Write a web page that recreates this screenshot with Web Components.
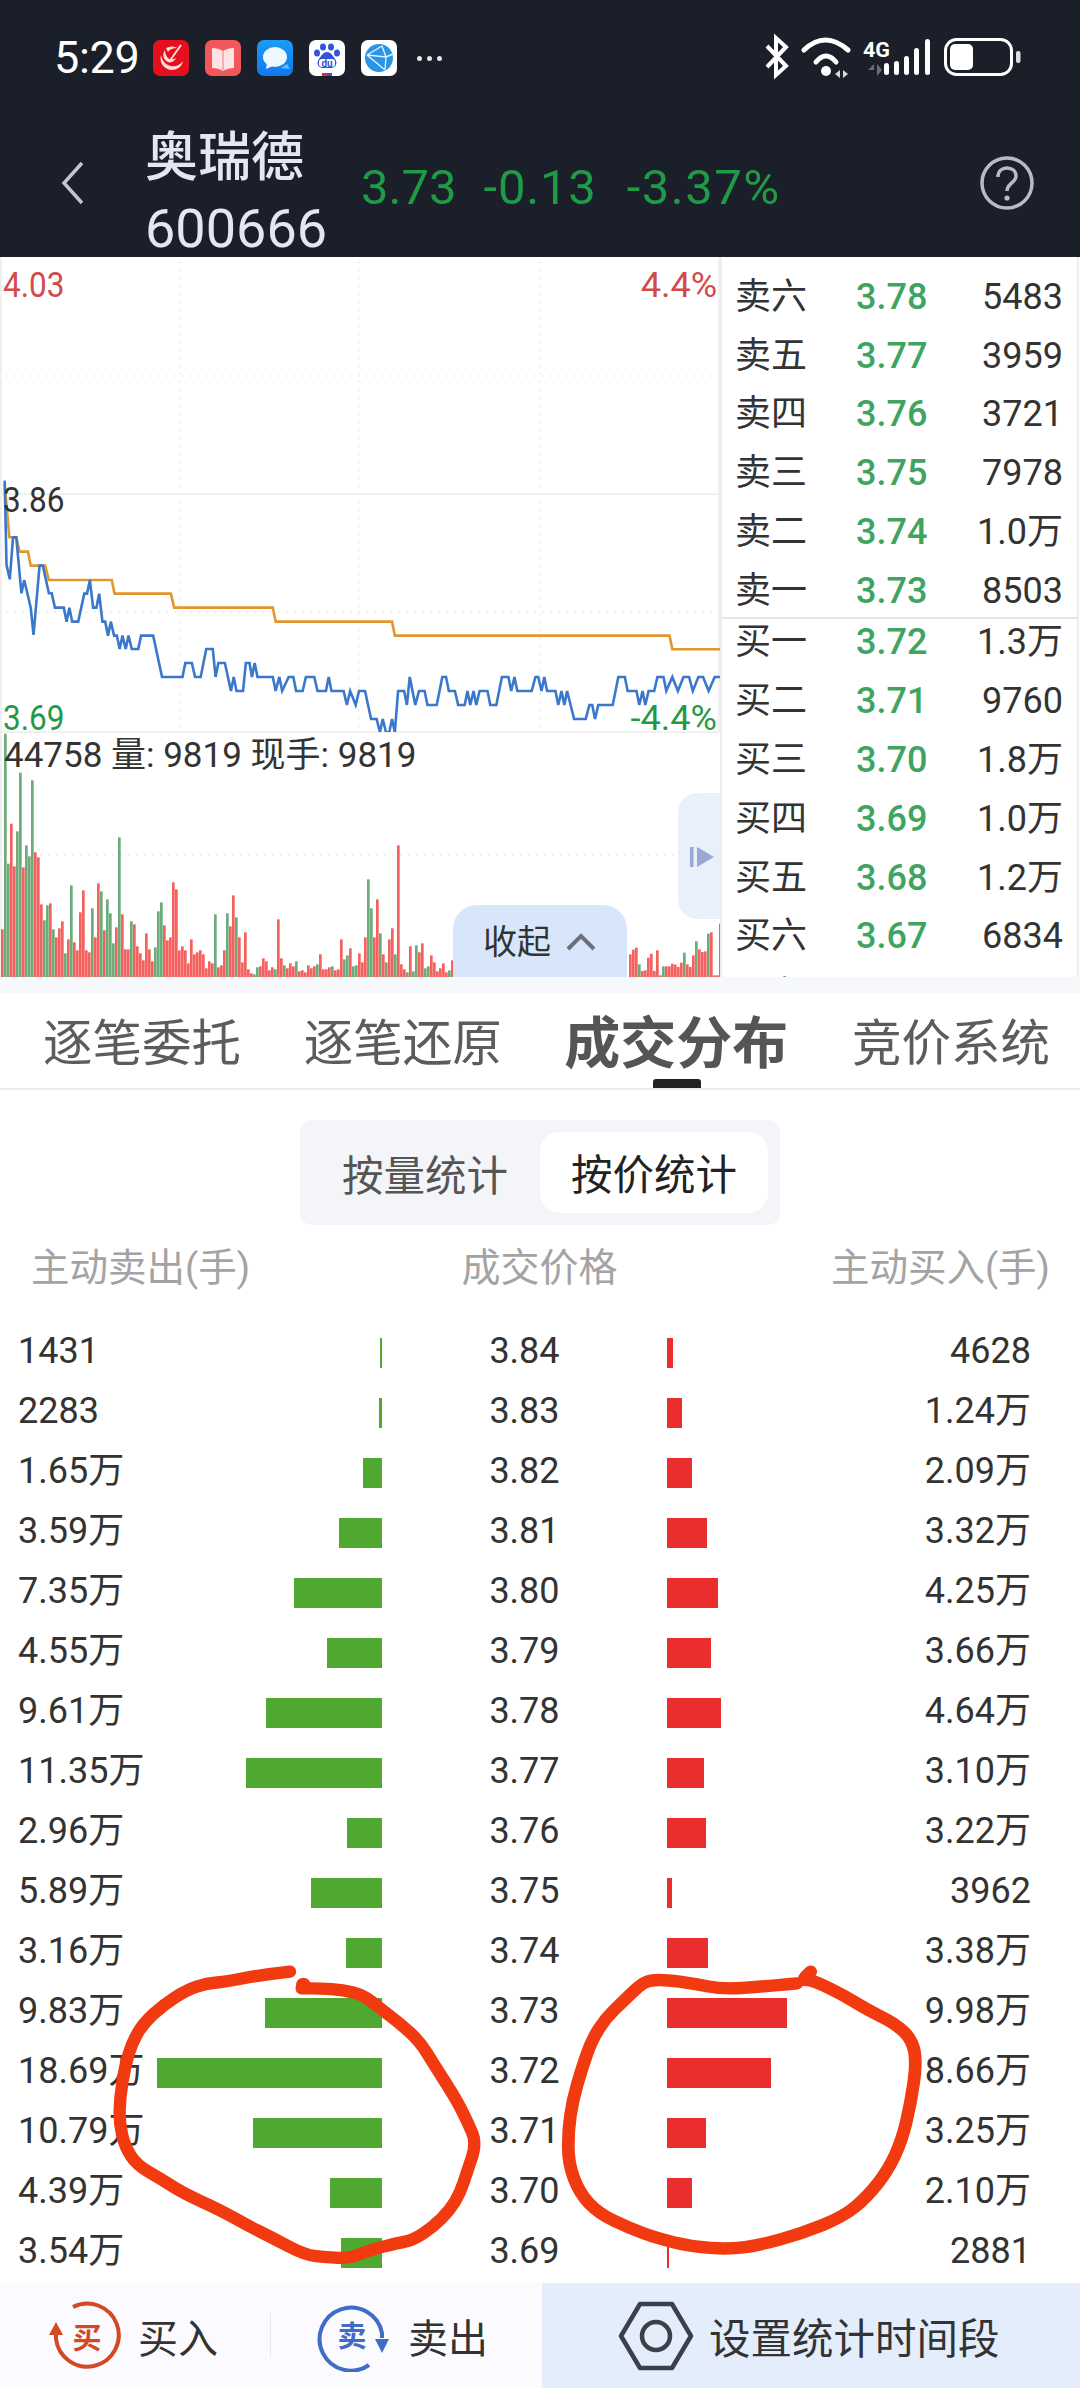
<!DOCTYPE html>
<html lang="zh">
<head>
<meta charset="utf-8">
<title>奥瑞德 成交分布</title>
<style>
  html, body { margin: 0; padding: 0; background: #fff; }
  body {
    width: 1080px;
    height: 2388px;
    overflow: hidden;
    position: relative;
    font-family: Roboto, "Noto Sans CJK SC", sans-serif;
    display: flex;
    flex-direction: column;
  }
</style>
</head>
<body>
  <status-bar></status-bar>
  <quote-header>
    <span slot="name">奥瑞德</span>
    <span slot="code">600666</span>
    <span slot="price">3.73</span>
    <span slot="change">-0.13</span>
    <span slot="percent">-3.37%</span>
  </quote-header>

  <market-panel>
    <minute-chart slot="chart"></minute-chart>
    <order-book slot="book">
      <book-row slot="sell" label="卖六" price="3.78">5483</book-row>
      <book-row slot="sell" label="卖五" price="3.77">3959</book-row>
      <book-row slot="sell" label="卖四" price="3.76">3721</book-row>
      <book-row slot="sell" label="卖三" price="3.75">7978</book-row>
      <book-row slot="sell" label="卖二" price="3.74">1.0万</book-row>
      <book-row slot="sell" label="卖一" price="3.73">8503</book-row>
      <book-row slot="buy" label="买一" price="3.72">1.3万</book-row>
      <book-row slot="buy" label="买二" price="3.71">9760</book-row>
      <book-row slot="buy" label="买三" price="3.70">1.8万</book-row>
      <book-row slot="buy" label="买四" price="3.69">1.0万</book-row>
      <book-row slot="buy" label="买五" price="3.68">1.2万</book-row>
      <book-row slot="buy" label="买六" price="3.67">6834</book-row>
      <book-row slot="buy" label="买七" price=""></book-row>
    </order-book>
  </market-panel>

  <tab-bar>
    <tab-item style="width:198px">逐笔委托</tab-item>
    <tab-item style="width:198px">逐笔还原</tab-item>
    <tab-item active style="width:225px">成交分布</tab-item>
    <tab-item style="width:198px">竞价系统</tab-item>
  </tab-bar>

  <seg-toggle>
    <span slot="first">按量统计</span>
    <span slot="second">按价统计</span>
  </seg-toggle>

  <dist-head></dist-head>
  <dist-table>
    <dist-row sell="1431" sw="2" price="3.84" bw="6" buy="4628"></dist-row>
    <dist-row sell="2283" sw="3" price="3.83" bw="15" buy="1.24万"></dist-row>
    <dist-row sell="1.65万" sw="19" price="3.82" bw="25" buy="2.09万"></dist-row>
    <dist-row sell="3.59万" sw="43" price="3.81" bw="40" buy="3.32万"></dist-row>
    <dist-row sell="7.35万" sw="88" price="3.80" bw="51" buy="4.25万"></dist-row>
    <dist-row sell="4.55万" sw="55" price="3.79" bw="44" buy="3.66万"></dist-row>
    <dist-row sell="9.61万" sw="116" price="3.78" bw="54" buy="4.64万"></dist-row>
    <dist-row sell="11.35万" sw="136" price="3.77" bw="37" buy="3.10万"></dist-row>
    <dist-row sell="2.96万" sw="35" price="3.76" bw="39" buy="3.22万"></dist-row>
    <dist-row sell="5.89万" sw="71" price="3.75" bw="5" buy="3962"></dist-row>
    <dist-row sell="3.16万" sw="36" price="3.74" bw="41" buy="3.38万"></dist-row>
    <dist-row sell="9.83万" sw="117" price="3.73" bw="120" buy="9.98万"></dist-row>
    <dist-row sell="18.69万" sw="225" price="3.72" bw="104" buy="8.66万"></dist-row>
    <dist-row sell="10.79万" sw="129" price="3.71" bw="39" buy="3.25万"></dist-row>
    <dist-row sell="4.39万" sw="52" price="3.70" bw="25" buy="2.10万"></dist-row>
    <dist-row sell="3.54万" sw="41" price="3.69" bw="2" buy="2881"></dist-row>
  </dist-table>

  <action-bar></action-bar>
  <scribble-overlay></scribble-overlay>

<script>
const FONT = `Roboto, "Noto Sans CJK SC", sans-serif`;

class StatusBar extends HTMLElement {
  constructor() {
    super();
    this.attachShadow({ mode: "open" });
    this.shadowRoot.innerHTML = `
      <style>
        :host { display: flex; align-items: flex-start; height: 116px; background: #1b1f2a; padding: 38px 0 0 54px; box-sizing: border-box; font-family: ${FONT}; }
        .time { width: 99px; font-size: 45px; line-height: 40px; font-weight: 400; color: #fff; letter-spacing: -0.3px; }
        .apps { display: flex; gap: 16px; margin-top: 2px; }
        .apps svg { width: 36px; height: 36px; display: block; }
        .more { width: 26px; margin: 2px 0 0 20px; display: flex; gap: 5px; height: 36px; align-items: center; }
        .more i { width: 5px; height: 5px; border-radius: 50%; background: #e6e6e6; }
        .sys { margin-left: auto; margin-right: 55px; width: 260px; height: 60px; margin-top: -8px; display: block; }
      </style>
      <span class="time">5:29</span>
      <div class="apps">
        <svg viewBox="0 0 36 36">
          <rect width="36" height="36" rx="7" fill="#e60f1e"/>
          <path d="M8 15c-2 8 3 14 10 15 6 0 11-3 12-9-3 4-7 6-12 5-5-1-9-5-10-11z" fill="#f9dcd8"/>
          <path d="M12 10c-3 4-2 10 3 12 4 1 7-1 8-4-3 2-6 2-8 0-2-2-3-5-3-8z" fill="#f9dcd8"/>
          <path d="M13 8c4-2 8-2 11 0-4 0-7 1-9 4z" fill="#f9dcd8"/>
          <path d="M16 22L28 5" stroke="#f9dcd8" stroke-width="2"/>
        </svg>
        <svg viewBox="0 0 36 36">
          <rect width="36" height="36" rx="7" fill="#f2585a"/>
          <path d="M7 8c4 0 8 1 11 3 3-2 7-3 11-3v20c-4 0-8 1-11 3-3-2-7-3-11-3z" fill="#fde3e3"/>
          <rect x="17" y="11" width="2" height="19" fill="#f7b1b1"/>
        </svg>
        <svg viewBox="0 0 36 36">
          <defs><linearGradient id="bl" x1="0" y1="0" x2="0" y2="1"><stop offset="0" stop-color="#1c9cf5"/><stop offset="1" stop-color="#0f78ee"/></linearGradient></defs>
          <rect width="36" height="36" rx="7" fill="url(#bl)"/>
          <path d="M30 24l3 5-9-1z" fill="#63c0f7"/>
          <ellipse cx="18" cy="17" rx="12" ry="10" fill="#eef8ff"/>
          <path d="M10 23l-1 6 7-3z" fill="#eef8ff"/>
        </svg>
        <svg viewBox="0 0 36 36">
          <rect width="36" height="36" rx="7" fill="#fff"/>
          <g fill="#3553d8">
            <ellipse cx="8" cy="13" rx="3" ry="3.6"/><ellipse cx="14" cy="7" rx="3" ry="3.6"/>
            <ellipse cx="22" cy="7" rx="3" ry="3.6"/><ellipse cx="28" cy="13" rx="3" ry="3.6"/>
            <path d="M18 12c4 0 6 4 8 7 3 4 1 9-4 9h-8c-5 0-7-5-4-9 2-3 4-7 8-7z"/>
          </g>
          <rect x="10" y="19" width="16" height="8" rx="3" fill="#fff"/>
          <text x="18" y="26.5" text-anchor="middle" font-family="Roboto" font-size="10" font-weight="700" fill="#3553d8">du</text>
          <rect x="13" y="33" width="5" height="3" fill="#d43232"/><rect x="18" y="33" width="5" height="3" fill="#3553d8"/>
        </svg>
        <svg viewBox="0 0 36 36">
          <rect width="36" height="36" rx="7" fill="#fff"/>
          <circle cx="18" cy="18" r="14" fill="#2a94e6"/>
          <path d="M6 15l15-9M6 15l18 15M21 6l4 11M25 17l-19-2M25 17l-1 13M25 17l7-3" stroke="#dff2ff" stroke-width="1.4" fill="none"/>
        </svg>
      </div>
      <div class="more"><i></i><i></i><i></i></div>
      <svg class="sys" viewBox="765 30 260 60">
        <path d="M767 46l19 20-10 9V38l10 9-19 20" fill="none" stroke="#fff" stroke-width="4"/>
        <g fill="none" stroke="#fff" stroke-linecap="round">
          <path d="M804 50q21-20 44 0" stroke-width="5"/>
          <path d="M816 62q10-12 20 0" stroke-width="5"/>
        </g>
        <circle cx="826" cy="71" r="5" fill="#fff"/>
        <path d="M840 70l-5 4 5 4zM843 70l5 4-5 4z" fill="#d8d8d8"/>
        <text x="863" y="57" font-family="Roboto" font-size="21" font-weight="700" fill="#fff" textLength="27" lengthAdjust="spacingAndGlyphs">4G</text>
        <path d="M874 64l-6 6 6 0zM877 64v12l5-6z" fill="#6b6d73"/>
        <g fill="#fff">
          <rect x="884" y="63" width="5" height="12" rx="2.5"/><rect x="894" y="61" width="5" height="14" rx="2.5"/>
          <rect x="904" y="56" width="5" height="19" rx="2.5"/><rect x="914" y="48" width="5" height="27" rx="2.5"/>
          <rect x="925" y="39" width="5" height="36" rx="2.5"/>
        </g>
        <rect x="945.5" y="39.5" width="66" height="35" rx="11" fill="none" stroke="#fff" stroke-width="3"/>
        <rect x="950" y="44" width="23" height="26" rx="5" fill="#fff"/>
        <rect x="1016" y="51" width="4.5" height="12" rx="2" fill="#ddd"/>
      </svg>
    `;
  }
}

class QuoteHeader extends HTMLElement {
  constructor() {
    super();
    this.attachShadow({ mode: "open" });
    this.shadowRoot.innerHTML = `
      <style>
        :host { display: flex; align-items: flex-start; height: 141px; background: #1b1f2a; font-family: ${FONT}; box-sizing: border-box; padding-left: 60px; }
        .back { width: 26px; height: 44px; margin-top: 45px; flex: none; }
        .id { width: 215px; margin-left: 59px; flex: none; margin-top: 10px; color: #e4e6f5; }
        .name { font-size: 53px; line-height: 64px; font-weight: 500; }
        .code { font-size: 54px; line-height: 64px; font-weight: 400; margin-top: 7px; }
        .nums { display: flex; color: #1f9a46; font-size: 49px; font-weight: 400; line-height: 56px; margin-top: 44px; margin-left: 1px; }
        ::slotted([slot=change]) { margin: 0 30px 0 27px; letter-spacing: 0.8px; }
        ::slotted([slot=percent]) { letter-spacing: 1.5px; }
        .help { width: 56px; height: 56px; margin: 39px 45px 0 auto; flex: none; }
      </style>
      <svg class="back" viewBox="0 0 26 44"><path d="M22 2L4 22l18 20" fill="none" stroke="#c4c6cd" stroke-width="3.5"/></svg>
      <div class="id">
        <div class="name"><slot name="name"></slot></div>
        <div class="code"><slot name="code"></slot></div>
      </div>
      <div class="nums"><slot name="price"></slot><slot name="change"></slot><slot name="percent"></slot></div>
      <svg class="help" viewBox="0 0 56 56">
        <circle cx="28" cy="28" r="25" fill="none" stroke="#b8bbc5" stroke-width="3.5"/>
        <path d="M19 22c0-6 4-9 9-9s9 3 9 8c0 7-9 7-9 15" fill="none" stroke="#b8bbc5" stroke-width="3.5"/>
        <circle cx="28" cy="43" r="2.6" fill="#b8bbc5"/>
      </svg>
    `;
  }
}

class MarketPanel extends HTMLElement {
  constructor() {
    super();
    this.attachShadow({ mode: "open" });
    this.shadowRoot.innerHTML = `
      <style>
        :host { display: grid; grid-template-columns: 720px 360px; height: 720px; background: #fff; }
      </style>
      <slot name="chart"></slot>
      <slot name="book"></slot>
    `;
  }
}

// 折线坐标都是从放大图上读的，下面 scale 还原回页面尺寸
const AVG_LINE = "M10,700 L20,862 H35 L42,905 H60 L66,947 H97 L105,990 H240 L246,1031 H367 L374,1073 H586 L592,1115 H842 L848,1157 H1438 L1444,1198 H1548";
const PRICE_LINE = "10,692 14,945 21,988 28,862 35,862 46,1030 52,990 66,1073 72,1155 85,947 92,947 105,1030 111,1030 118,1073 137,1073 143,1115 149,1073 155,1115 168,1115 181,1031 187,1031 193,990 200,1073 207,1073 213,1031 220,1115 226,1115 232,1157 238,1115 245,1157 251,1157 257,1197 263,1157 270,1197 276,1157 283,1197 297,1197 303,1157 329,1157 348,1281 392,1281 398,1239 412,1239 419,1281 431,1281 443,1197 457,1197 463,1281 469,1239 483,1239 496,1323 502,1281 508,1323 522,1323 528,1239 536,1239 541,1281 547,1239 553,1281 586,1281 592,1323 600,1281 606,1323 620,1281 630,1281 636,1323 650,1323 657,1281 675,1281 682,1323 700,1323 706,1281 712,1323 738,1323 745,1365 752,1323 764,1365 771,1323 784,1323 797,1407 809,1407 816,1447 822,1407 829,1447 836,1447 842,1407 848,1447 855,1323 868,1323 874,1365 880,1281 892,1365 900,1323 912,1323 918,1365 938,1365 950,1281 958,1281 964,1323 977,1323 984,1365 998,1365 1004,1323 1010,1365 1017,1323 1023,1365 1030,1323 1047,1323 1053,1365 1066,1365 1078,1281 1092,1281 1098,1323 1105,1281 1111,1323 1142,1323 1150,1281 1156,1281 1163,1323 1169,1281 1175,1323 1193,1323 1199,1365 1206,1323 1212,1365 1218,1323 1233,1407 1258,1407 1266,1365 1272,1365 1278,1407 1285,1365 1316,1365 1328,1281 1342,1281 1348,1323 1367,1323 1373,1365 1380,1323 1386,1365 1393,1323 1405,1323 1412,1281 1425,1281 1431,1323 1444,1281 1456,1323 1468,1281 1480,1281 1488,1323 1500,1281 1510,1281 1522,1323 1535,1281 1548,1281";
const VOL_LEFT = "R597 G10 G400 R280 R408 G303 G127 R411 G345 G378 G150 R366 R381 R522 G570 G525 R519 G597 R621 R594 R573 G669 R627 G465 R636 R660 R546 R480 R660 R666 G534 R621 R459 G483 R600 G507 G549 G639 R591 G321 R552 R657 R657 G573 R582 R648 R669 R690 R609 R657 R693 G651 G543 G516 R585 R630 R621 R456 R477 R660 R648 R660 R699 R627 R672 R666 R660 R672 R714 R693 R699 G552 R711 R705 R660 G549 R588 R495 G561 R621 R696 R606 R717 R729 G732 G711 R708 R684 R693 R720 R711 G717 R567 R684 G705 R714 R699 R708 G693 R723 R720 R726 R705 R714 R708 G702 R672 R717 R717 R711 G708 R720 R717 R627 G687 G675 R654 G708 G705 R669 R696 R621 G447 G534 R621 R507 G609 R672 G696 R627 R594 G672 R345 R702 R717 G726 R648 G723 G645 R666 R639 G714 G708 R675 R696 R723 R714 R699 R726 G720 R690";
const VOL_RIGHT = "R702 R688 R682 G732 R752 R750 R712 R700 R752 R690 R765 G738 R738 R738 R730 R733 R740 R727 G697 R732 R740 R705 G663 R687 R695 R693 G640 R636 R765 R765 R610";

class MinuteChart extends HTMLElement {
  constructor() {
    super();
    this.attachShadow({ mode: "open" });
    this.shadowRoot.innerHTML = `
      <style>
        :host { display: block; position: relative; height: 720px; overflow: hidden; background: #fff; font-family: ${FONT}; font-size: 35px; line-height: 30px; }
        svg.plot { display: block; width: 720px; height: 720px; }
        .lab { position: absolute; }
        .l { transform: scaleX(0.9); transform-origin: left center; left: 3px; }
        .r { transform: scaleX(1.03); transform-origin: right center; right: 3px; }
        .up { color: #d14b4b; }
        .down { color: #1f9a46; }
        .info { position: absolute; left: 4px; top: 484px; color: #333; white-space: pre; font-size: 35px; line-height: 30px; }
        .fold { position: absolute; left: 453px; bottom: 0; width: 174px; height: 72px; background: #d8e6fb; border-radius: 24px 24px 0 0; display: flex; align-items: center; padding: 2px 0 0 30px; box-sizing: border-box; gap: 14px; font-size: 34px; color: #333; }
        .fold svg { width: 32px; height: 20px; }
        .side { position: absolute; left: 678px; top: 536px; width: 42px; height: 126px; background: #eaf0fb; border-radius: 20px 0 0 20px; }
        .side svg { position: absolute; left: 12px; top: 54px; width: 26px; height: 20px; }
      </style>
      <svg class="plot" viewBox="0 0 720 720"></svg>
      <span class="lab l up" style="top:14px">4.03</span>
      <span class="lab r up" style="top:14px">4.4%</span>
      <span class="lab l" style="top:229px;color:#333">3.86</span>
      <span class="lab l down" style="top:447px">3.69</span>
      <span class="lab r down" style="top:447px">-4.4%</span>
      <span class="info">44758 量: 9819 现手: 9819</span>
      <div class="side"><svg viewBox="0 0 26 20"><rect width="3.5" height="20" fill="#9aa8d4"/><path d="M7 0l17 10L7 20z" fill="#9aa8d4"/></svg></div>
      <div class="fold">收起<svg viewBox="0 0 32 20"><path d="M3 17L16 4l13 13" fill="none" stroke="#6c6f75" stroke-width="4"/></svg></div>
    `;
    this.drawPlot();
  }

  drawPlot() {
    const bar = (token, x) => {
      const top = parseInt(token.slice(1));
      const h = (740 - top) / 3;
      const color = token[0] === "R" ? "#f4625f" : "#6dab7a";
      return `<rect x="${x}" y="${720 - h}" width="2.7" height="${h}" fill="${color}"/>`;
    };
    let bars = VOL_LEFT.split(" ").map((t, i) => bar(t, 1 + i * 3)).join("");
    bars += VOL_RIGHT.split(" ").map((t, i) => {
      // 右段读数基线是 770，换成和左段一样的 740
      const top = parseInt(t.slice(1)) - 30;
      return bar(t[0] + top, 629 + i * 3);
    }).join("");

    const grid = `
      <g stroke="#ececec" stroke-width="1.5" stroke-dasharray="2 6">
        <path d="M6 119H716M6 355H716M40 598H680M180 4V475M359 4V475M540 4V475"/>
      </g>
      <g stroke="#f0f0f1" stroke-width="2"><path d="M0 237H720M0 475H720M1 0V720M719 0V475"/></g>
    `;
    const lines = `
      <g transform="translate(0,-7) scale(0.4656,0.3333)" fill="none" stroke-linejoin="miter">
        <path d="${AVG_LINE}" stroke="#e2962f" stroke-width="2.6" vector-effect="non-scaling-stroke"/>
        <polyline points="${PRICE_LINE}" stroke="#3a78cc" stroke-width="2.6" vector-effect="non-scaling-stroke"/>
      </g>
    `;
    this.shadowRoot.querySelector(".plot").innerHTML = grid + `<clipPath id="c"><rect width="720" height="475"/></clipPath><g clip-path="url(#c)">${lines}</g>` + bars;
  }
}

class OrderBook extends HTMLElement {
  constructor() {
    super();
    this.attachShadow({ mode: "open" });
    this.shadowRoot.innerHTML = `
      <style>
        :host { display: flex; flex-direction: column; height: 720px; box-sizing: border-box; background: #fff; border-left: 2px solid #eeeeef; border-right: 2px solid #eeeeef; width: 359px; overflow: hidden; }
        .sell { padding-top: 10.5px; height: 362px; box-sizing: border-box; overflow: hidden; border-bottom: 2px solid #e6e6e8; flex: none; }
        .buy { flex: 1; overflow: hidden; }
        .buy > div { margin-top: -6px; }
      </style>
      <div class="sell"><slot name="sell"></slot></div>
      <div class="buy"><div><slot name="buy"></slot></div></div>
    `;
  }
}

class BookRow extends HTMLElement {
  connectedCallback() {
    if (this.shadowRoot) return;
    this.attachShadow({ mode: "open" });
    this.shadowRoot.innerHTML = `
      <style>
        :host { display: grid; grid-template-columns: 121px 100px 1fr; height: 58.8px; align-items: center; font-family: ${FONT}; font-size: 36px; line-height: 40px; color: #333; padding: 0 14px 0 13px; }
        .p { color: #3fa461; font-weight: 500; }
        .q { text-align: right; }
      </style>
      <span>${this.getAttribute("label")}</span>
      <span class="p">${this.getAttribute("price")}</span>
      <span class="q"><slot></slot></span>
    `;
  }
}

class TabBar extends HTMLElement {
  constructor() {
    super();
    this.attachShadow({ mode: "open" });
    this.shadowRoot.innerHTML = `
      <style>
        :host { display: flex; justify-content: space-between; align-items: stretch; height: 113px; box-sizing: border-box; padding: 16px 30px 0 43px; background: linear-gradient(#f7f8fc 16px, #fff 16px); border-bottom: 2px solid #ececec; font-family: ${FONT}; }
      </style>
      <slot></slot>
    `;
  }
}

class TabItem extends HTMLElement {
  constructor() {
    super();
    this.attachShadow({ mode: "open" });
    this.shadowRoot.innerHTML = `
      <style>
        :host { display: block; position: relative; font-size: 49.5px; line-height: 102px; height: 95px; color: #5c5c5c; white-space: nowrap; }
        :host([active]) { font-size: 56px; font-weight: 700; color: #555; }
        .mark { display: none; }
        :host([active]) .mark { display: block; position: absolute; left: 89px; bottom: 0; width: 48px; height: 9px; border-radius: 3px 3px 0 0; background: #222; }
      </style>
      <slot></slot><div class="mark"></div>
    `;
  }
}

class SegToggle extends HTMLElement {
  constructor() {
    super();
    this.attachShadow({ mode: "open" });
    this.shadowRoot.innerHTML = `
      <style>
        :host { display: flex; align-items: center; width: 480px; height: 105px; margin: 30px 0 0 300px; background: #f4f5f9; border-radius: 12px; box-sizing: border-box; padding: 0 12px 0 42px; font-family: ${FONT}; font-size: 41.5px; color: #555; }
        .on { margin-left: auto; width: 228px; height: 81px; background: #fff; border-radius: 20px; color: #222; display: flex; align-items: center; justify-content: center; margin-top: -1px; }
      </style>
      <slot name="first"></slot>
      <div class="on"><slot name="second"></slot></div>
    `;
  }
}

class DistHead extends HTMLElement {
  constructor() {
    super();
    this.attachShadow({ mode: "open" });
    this.shadowRoot.innerHTML = `
      <style>
        :host { display: grid; grid-template-columns: 382px 285px 1fr; height: 98px; box-sizing: border-box; padding-bottom: 13px; align-items: center; font-family: ${FONT}; font-size: 38.5px; line-height: 44px; color: #a3a3a3; }
        .a { padding-left: 31px; }
        .b { text-align: center; font-size: 39px; padding-left: 30px; }
        .c { text-align: right; padding-right: 30px; }
      </style>
      <span class="a">主动卖出(手)</span><span class="b">成交价格</span><span class="c">主动买入(手)</span>
    `;
  }
}

class DistTable extends HTMLElement {
  constructor() {
    super();
    this.attachShadow({ mode: "open" });
    this.shadowRoot.innerHTML = `
      <style>:host { display: block; height: 960px; overflow: hidden; }</style>
      <slot></slot>
    `;
  }
}

class DistRow extends HTMLElement {
  connectedCallback() {
    if (this.shadowRoot) return;
    const a = (n) => this.getAttribute(n);
    this.attachShadow({ mode: "open" });
    this.shadowRoot.innerHTML = `
      <style>
        :host { display: grid; grid-template-columns: 382px 285px 1fr; height: 60px; align-items: center; font-family: ${FONT}; font-size: 36px; line-height: 40px; color: #333; }
        .l { display: flex; align-items: center; justify-content: space-between; padding-left: 18px; }
        .p { text-align: center; margin-bottom: 4px; }
        .r { display: flex; align-items: center; justify-content: space-between; padding-right: 49px; }
        span { margin-bottom: 4px; }
        i { display: block; height: 30px; }
        .l i { background: #4fa82f; }
        .r i { background: #ea2e2e; }
      </style>
      <div class="l"><span>${a("sell")}</span><i style="width:${a("sw")}px"></i></div>
      <div class="p">${a("price")}</div>
      <div class="r"><i style="width:${a("bw")}px"></i><span>${a("buy")}</span></div>
    `;
  }
}

class ActionBar extends HTMLElement {
  constructor() {
    super();
    this.attachShadow({ mode: "open" });
    this.shadowRoot.innerHTML = `
      <style>
        :host { display: grid; grid-template-columns: 270px 272px 1fr; height: 105px; background: #fafaff; font-family: ${FONT}; color: #333; }
        .btn { display: flex; align-items: center; gap: 16px; font-size: 40px; padding-left: 46px; position: relative; }
        .btn + .btn::before { content: ""; position: absolute; left: 0; top: 30px; height: 45px; width: 1px; background: #e9e9ee; }
        .btn svg { width: 76px; height: 72px; flex: none; }
        .set { display: flex; align-items: center; gap: 15px; background: #e3edfb; padding-left: 76px; font-size: 41.5px; }
        .set svg { width: 76px; height: 70px; flex: none; }
      </style>
      <div class="btn">
        <svg viewBox="0 0 76 72">
          <path d="M10 33V39A31.5 31.5 0 1 0 27 7" fill="none" stroke="#d14a24" stroke-width="4"/>
          <path d="M10 22l-7 13h14z" fill="#d14a24"/>
          <text x="41" y="49" text-anchor="middle" font-family="Noto Sans CJK SC" font-size="29" font-weight="700" fill="#d14a24">买</text>
        </svg>
        <span>买入</span>
      </div>
      <div class="btn">
        <svg viewBox="0 0 76 72">
          <path d="M66 38V33A31.5 31.5 0 1 0 53 65" fill="none" stroke="#3f6cc4" stroke-width="4"/>
          <path d="M66 53l7-14H59z" fill="#3f6cc4"/>
          <text x="36" y="47" text-anchor="middle" font-family="Noto Sans CJK SC" font-size="29" font-weight="700" fill="#3f6cc4">卖</text>
        </svg>
        <span>卖出</span>
      </div>
      <div class="set">
        <svg viewBox="0 0 76 70">
          <path d="M22 3H54L73 35 54 67H22L3 35z" fill="none" stroke="#3c3f47" stroke-width="4.5" stroke-linejoin="round"/>
          <circle cx="38" cy="35" r="14" fill="none" stroke="#3c3f47" stroke-width="4.5"/>
        </svg>
        <span>设置统计时间段</span>
      </div>
    `;
  }
}

// 用中点二次曲线把手画的圈连顺
function smoothPath(pts) {
  let d = `M${pts[0][0]},${pts[0][1]}`;
  for (let i = 1; i < pts.length - 1; i++) {
    const mx = (pts[i][0] + pts[i + 1][0]) / 2;
    const my = (pts[i][1] + pts[i + 1][1]) / 2;
    d += ` Q${pts[i][0]},${pts[i][1]} ${mx},${my}`;
  }
  const last = pts[pts.length - 1];
  return d + ` L${last[0]},${last[1]}`;
}

const LEFT_LOOP = [[690,125],[600,135],[500,155],[440,160],[380,180],[310,225],[250,280],[215,340],[195,410],[180,500],[178,580],[195,650],[230,705],[300,745],[370,790],[480,840],[560,885],[640,925],[735,975],[800,982],[870,985],[930,960],[1010,940],[1060,930],[1120,890],[1170,840],[1200,790],[1220,730],[1250,640],[1225,580],[1190,510],[1120,400],[1080,335],[1020,280],[960,235],[910,195],[850,180],[780,175],[725,175]];
const RIGHT_LOOP = [[745,160],[640,170],[530,178],[440,160],[370,150],[320,150],[290,165],[240,215],[190,265],[150,330],[120,420],[95,510],[82,600],[82,700],[115,790],[170,850],[260,895],[340,925],[440,950],[550,958],[640,945],[760,910],[880,860],[950,800],[1010,720],[1050,630],[1075,520],[1092,400],[1080,330],[1030,280],[950,240],[880,195],[790,150],[760,150],[785,125]];

class ScribbleOverlay extends HTMLElement {
  constructor() {
    super();
    this.attachShadow({ mode: "open" });
    this.shadowRoot.innerHTML = `
      <style>
        :host { position: absolute; left: 0; top: 0; width: 1080px; height: 2388px; pointer-events: none; }
        svg { display: block; }
      </style>
      <svg width="1080" height="2388" viewBox="0 0 1080 2388" fill="none" stroke="#f23a10" stroke-linecap="round" stroke-linejoin="round">
        <g transform="translate(60,1930) scale(0.3333)">
          <path d="${smoothPath(LEFT_LOOP)}" stroke-width="37"/>
          <circle cx="730" cy="165" r="22" fill="#f23a10" stroke="none"/>
        </g>
        <g transform="translate(540,1930) scale(0.3448,0.3333)">
          <path d="${smoothPath(RIGHT_LOOP)}" stroke-width="37"/>
        </g>
      </svg>
    `;
  }
}

customElements.define("status-bar", StatusBar);
customElements.define("quote-header", QuoteHeader);
customElements.define("market-panel", MarketPanel);
customElements.define("minute-chart", MinuteChart);
customElements.define("order-book", OrderBook);
customElements.define("book-row", BookRow);
customElements.define("tab-bar", TabBar);
customElements.define("tab-item", TabItem);
customElements.define("seg-toggle", SegToggle);
customElements.define("dist-head", DistHead);
customElements.define("dist-table", DistTable);
customElements.define("dist-row", DistRow);
customElements.define("action-bar", ActionBar);
customElements.define("scribble-overlay", ScribbleOverlay);
</script>
</body>
</html>
